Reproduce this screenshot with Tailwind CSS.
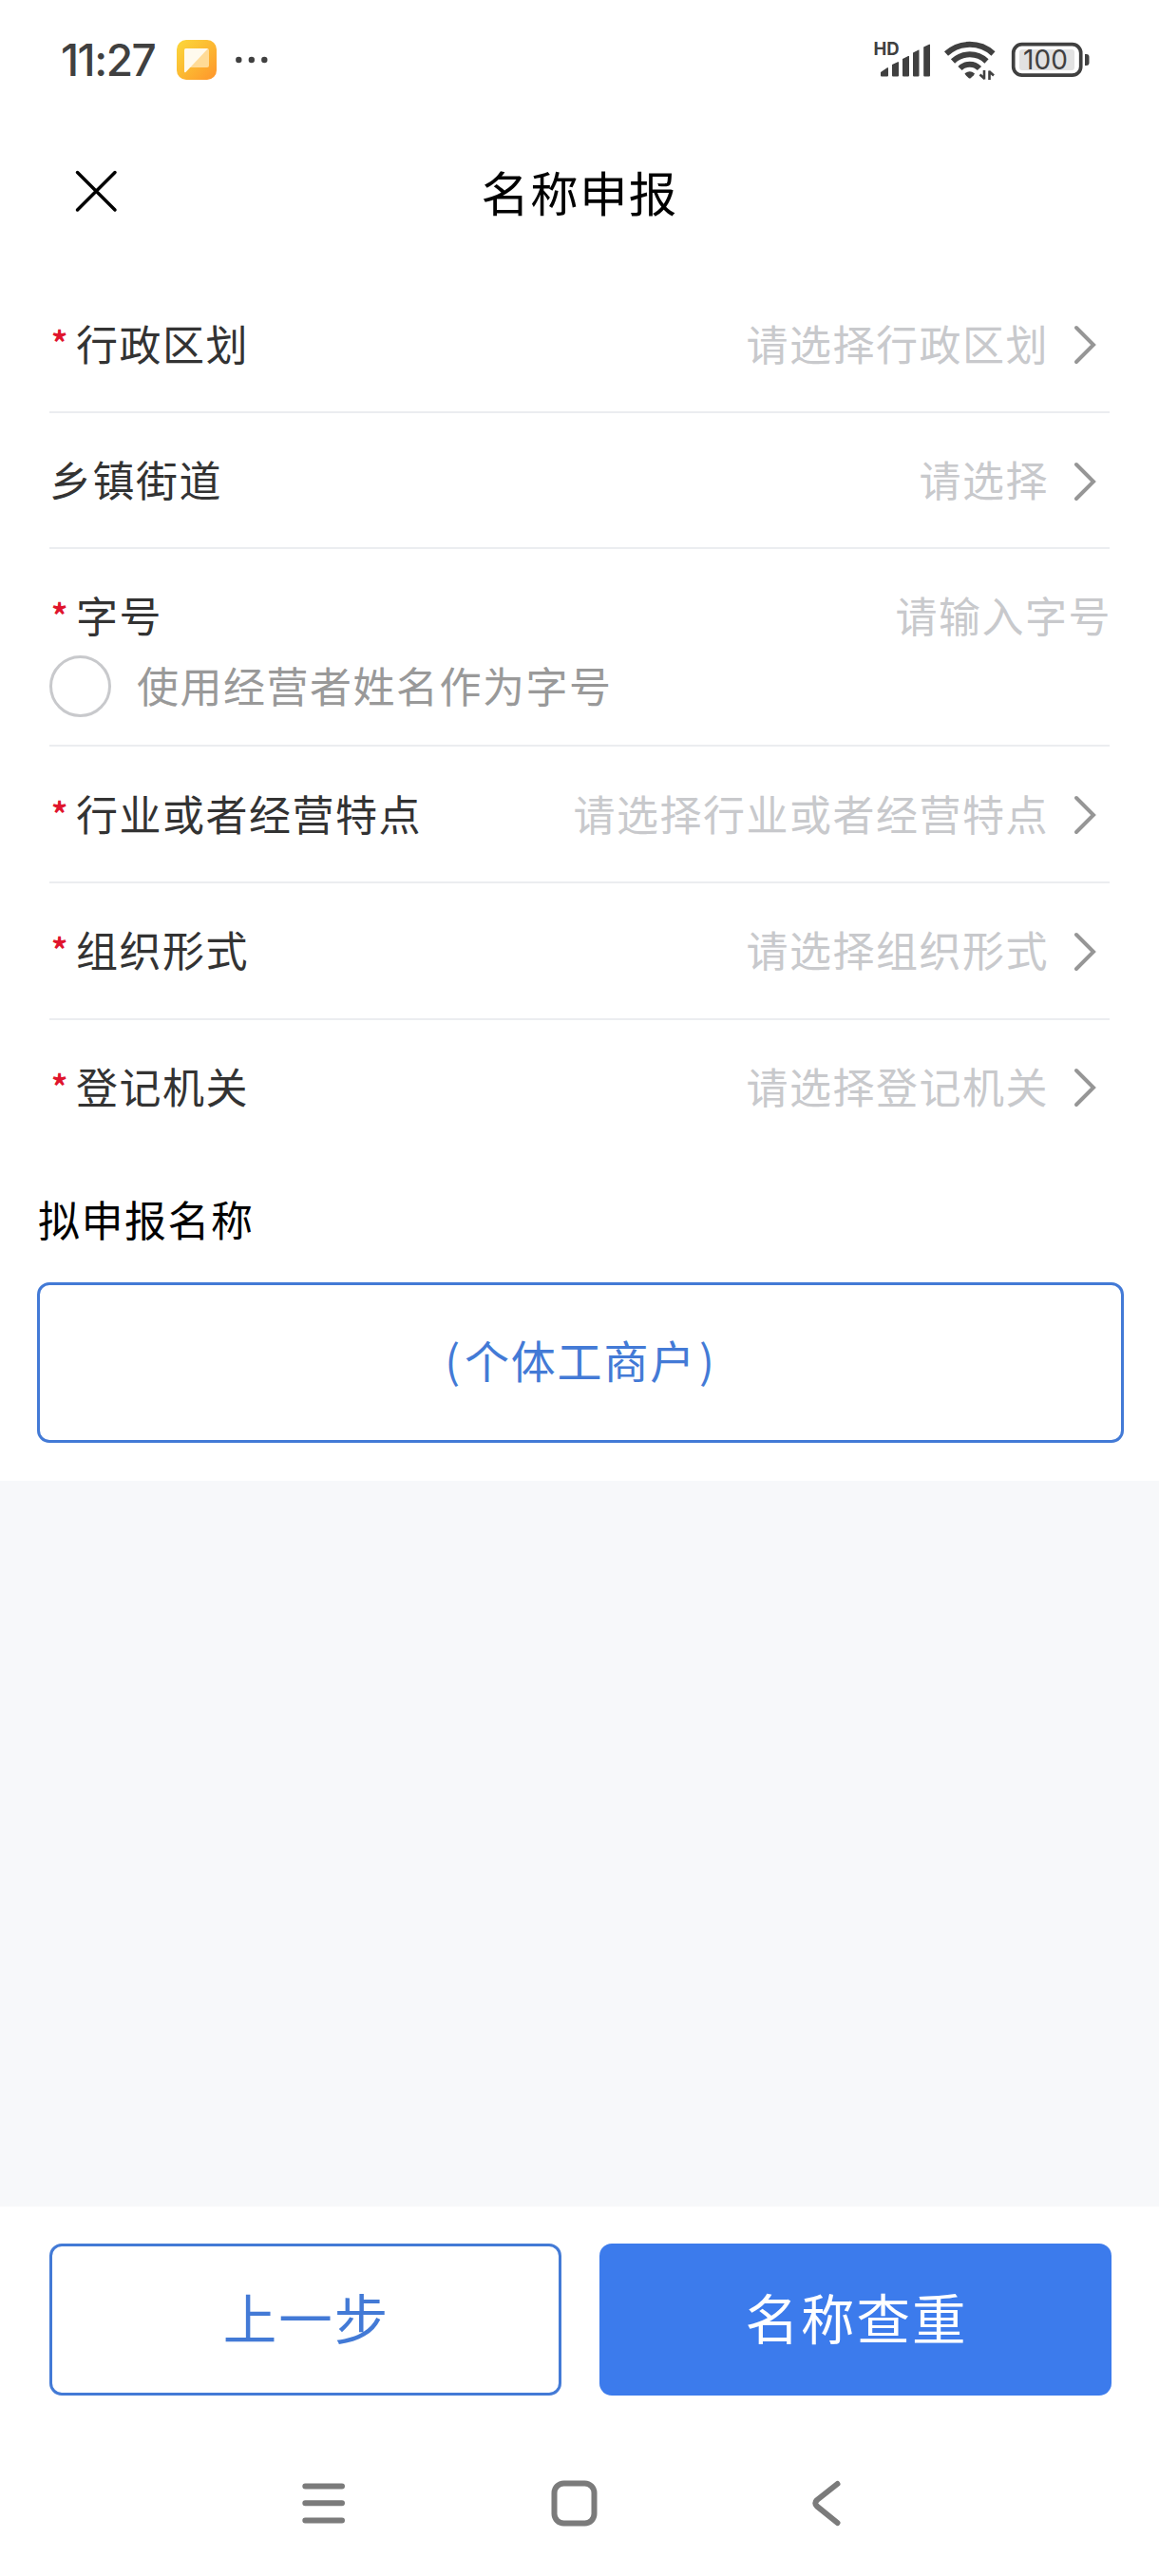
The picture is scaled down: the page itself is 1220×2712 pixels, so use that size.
<!DOCTYPE html>
<html lang="zh-CN">
  <head>
    <meta charset="UTF-8" />
    <meta name="viewport" content="width=device-width, initial-scale=1.0" />
    <script src="https://cdn.jsdelivr.net/npm/@tailwindcss/browser@4"></script>
    <title>名称申报</title>
  </head>
  <body class="bg-white font-['Noto_Sans_CJK_SC',sans-serif] text-[44px] tracking-[1.5px] leading-none text-[#333333]">
    <div class="flex flex-col h-[2712px] w-[1220px] overflow-hidden">
      <!-- status bar -->
      <div class="flex items-center justify-between h-[126px] pl-[64px] pr-[73px]">
        <div class="flex items-center">
          <div class="w-[122px] font-[Inter,sans-serif] font-medium text-[46px] tracking-[-1.5px] text-[#404040] whitespace-nowrap">11:27</div>
          <svg class="w-[42px] h-[42px]" viewBox="0 0 42 42">
            <defs>
              <linearGradient id="note" x1="0" y1="0" x2="1" y2="1">
                <stop offset="0" stop-color="#fbd83c" />
                <stop offset="0.5" stop-color="#fcb932" />
                <stop offset="1" stop-color="#ff942b" />
              </linearGradient>
            </defs>
            <rect width="42" height="42" rx="10" fill="url(#note)" />
            <path d="M10 9h22a2 2 0 0 1 2 2v16a2 2 0 0 1-2 2H13z" fill="#ffdb97" />
            <path d="M9.500 9H33L9.500 34Q8 35 8 33V10.500Q8 9 9.500 9z" fill="#fffaee" />
          </svg>
          <svg class="ml-[19px] w-[36px] h-[8px]" viewBox="0 0 36 8" fill="#404040">
            <circle cx="4.300" cy="4" r="3.200" />
            <circle cx="17.800" cy="4" r="3.200" />
            <circle cx="31.300" cy="4" r="3.200" />
          </svg>
        </div>
        <svg class="w-[228px] h-[50px] tracking-normal" viewBox="920 38 228 50" fill="#404040">
          <text x="920.500" y="58" font-family="Inter, sans-serif" font-size="18.500" font-weight="700">HD</text>
          <!-- signal -->
          <path d="M928 76l7-4.800h1v8.300q0 1-1 1h-6q-1 0-1-1zM940 68l6-2.800h1v14.300q0 1-1 1h-5q-1 0-1-1zM951 62l6-3h1v20.500q0 1-1 1h-5q-1 0-1-1zM962 55.500l6-3h.5v27q0 1-1 1h-4.500q-1 0-1-1zM973.200 49.500l5.800-2.800h1v32.800q0 1-1 1h-4.800q-1 0-1-1z" />
          <!-- wifi -->
          <g fill="none" stroke="#404040" stroke-width="6">
            <path d="M997 56.500A36.500 36.500 0 0 1 1046.500 56.500" />
            <path d="M1004 64.500A25.500 25.500 0 0 1 1039.500 64.500" />
            <path d="M1011.500 72A14.500 14.500 0 0 1 1032 72" />
          </g>
          <path d="M1016.500 77.500Q1021.700 73 1027 77.500Q1026.500 79 1023 82Q1021.700 83 1020.500 82Q1017 79 1016.500 77.500z" />
          <path d="M1037 74v9.500M1037.500 83l-5-4.500M1042.500 84v-9.500M1042 75l5 4.500" fill="none" stroke="#404040" stroke-width="2.600" />
          <!-- battery -->
          <rect x="1067.700" y="46.700" width="71" height="32.500" rx="9" fill="none" stroke="#404040" stroke-width="3.700" />
          <rect x="1074" y="52" width="58" height="22" rx="3" fill="#e2e2e2" />
          <path d="M1143 57h1.500q3 0 3 3v6q0 3-3 3h-1.500z" />
          <text x="1101.500" y="73" text-anchor="middle" font-family="Inter, sans-serif" font-size="28" textLength="47" lengthAdjust="spacing">100</text>
        </svg>
      </div>

      <!-- title bar -->
      <div class="grid grid-cols-[1fr_auto_1fr] items-center h-[154px] px-[78px]">
        <svg class="w-[46px] h-[46px] -mt-1" viewBox="0 0 46 46" fill="none" stroke="#000" stroke-width="3.500" stroke-linecap="round">
          <path d="M3.500 3.500L43 43M43 3.500L3.500 43" />
        </svg>
        <h1 class="pb-1 text-[50.500px] tracking-[1.300px] text-black">名称申报</h1>
      </div>

      <!-- form -->
      <div class="pt-[11px] px-[52px]">
        <div class="flex items-center h-[143.700px] border-b-2 border-[#ebedf0]">
          <span class="w-[28px] pl-[2px] pb-[3px] text-[34px] font-bold text-[#e0142d]">*</span>
          <span class="pb-[2px]">行政区划</span>
          <span class="ml-auto pb-[2px] text-[#c8c9cc]">请选择行政区划</span>
          <svg class="mt-[2px] ml-[24px] mr-[12px] w-[28px] h-[44px]" viewBox="0 0 28 44" fill="none" stroke="#969696" stroke-width="4" stroke-linecap="round"><path d="M5 4L23 22L5 40" /></svg>
        </div>
        <div class="flex items-center h-[143.700px] border-b-2 border-[#ebedf0]">
          <span class="pb-[3px]">乡镇街道</span>
          <span class="ml-auto pb-[3px] text-[#c8c9cc]">请选择</span>
          <svg class="mt-[2px] ml-[24px] mr-[12px] w-[28px] h-[44px]" viewBox="0 0 28 44" fill="none" stroke="#969696" stroke-width="4" stroke-linecap="round"><path d="M5 4L23 22L5 40" /></svg>
        </div>
        <div class="h-[208px] border-b-2 border-[#ebedf0]">
          <div class="flex items-center h-[112px] pt-[28px]">
            <span class="w-[28px] pl-[2px] pb-[3px] text-[34px] font-bold text-[#e0142d]">*</span>
            <span class="pb-[2px]">字号</span>
            <span class="ml-auto -mr-[2px] pb-[2px] text-[#c8c9cc]">请输入字号</span>
          </div>
          <div class="flex items-center gap-[27px] text-[#999999]">
            <span class="w-[65px] h-[65px] rounded-full border-3 border-[#c8c9cc]"></span>
            <span class="pb-1">使用经营者姓名作为字号</span>
          </div>
        </div>
        <div class="flex items-center h-[143.700px] border-b-2 border-[#ebedf0]">
          <span class="w-[28px] pl-[2px] pb-[3px] text-[34px] font-bold text-[#e0142d]">*</span>
          <span class="pb-[2px]">行业或者经营特点</span>
          <span class="ml-auto pb-[2px] text-[#c8c9cc]">请选择行业或者经营特点</span>
          <svg class="mt-[2px] ml-[24px] mr-[12px] w-[28px] h-[44px]" viewBox="0 0 28 44" fill="none" stroke="#969696" stroke-width="4" stroke-linecap="round"><path d="M5 4L23 22L5 40" /></svg>
        </div>
        <div class="flex items-center h-[143.700px] border-b-2 border-[#ebedf0]">
          <span class="w-[28px] pl-[2px] pb-[3px] text-[34px] font-bold text-[#e0142d]">*</span>
          <span class="pb-[3px]">组织形式</span>
          <span class="ml-auto pb-[3px] text-[#c8c9cc]">请选择组织形式</span>
          <svg class="mt-[2px] ml-[24px] mr-[12px] w-[28px] h-[44px]" viewBox="0 0 28 44" fill="none" stroke="#969696" stroke-width="4" stroke-linecap="round"><path d="M5 4L23 22L5 40" /></svg>
        </div>
        <div class="flex items-center h-[142.700px]">
          <span class="w-[28px] pl-[2px] pb-[4px] text-[34px] font-bold text-[#e0142d]">*</span>
          <span class="pb-[4px]">登记机关</span>
          <span class="ml-auto pb-[4px] text-[#c8c9cc]">请选择登记机关</span>
          <svg class="ml-[24px] mr-[12px] w-[28px] h-[44px]" viewBox="0 0 28 44" fill="none" stroke="#969696" stroke-width="4" stroke-linecap="round"><path d="M5 4L23 22L5 40" /></svg>
        </div>
      </div>

      <!-- proposed name -->
      <div class="flex-none pl-[39px] pr-[37px] pb-[40px]">
        <div class="flex items-center h-[133.500px] pl-px text-black">拟申报名称</div>
        <div class="flex items-center justify-center gap-[3px] h-[169px] pb-[8px] rounded-[13px] border-3 border-[#437ad6] text-[47px] tracking-[1.800px] text-[#437ad6]"><span>(</span><span>个体工商户</span><span>)</span></div>
      </div>

      <div class="grow bg-[#f7f8fa]"></div>

      <!-- actions -->
      <div class="flex justify-between h-[199px] pt-[39px] pl-[52px] pr-[50px] text-[56.500px] tracking-[2px]">
        <button class="w-[539px] pb-[8px] pl-[2px] rounded-[13px] border-3 border-[#437ad6] text-[#437ad6]">上一步</button>
        <button class="w-[539px] pb-[8px] pl-[2px] rounded-[13px] bg-[#3c7bec] text-white">名称查重</button>
      </div>

      <!-- system navigation -->
      <div class="flex-none h-[190px] pt-[87px] pl-[316px]">
        <svg class="w-[572px] h-[52px]" viewBox="317 2609 572 52" fill="none" stroke="#7b7b7b" stroke-width="6" stroke-linecap="round" stroke-linejoin="round">
          <path d="M322.300 2617.500H361M322.300 2635.300H361M322.300 2653.500H361" />
          <rect x="584.500" y="2614.500" width="42" height="42" rx="10" />
          <path d="M882.500 2615L861 2632Q857.500 2635.300 861 2638.700L882.500 2656" />
        </svg>
      </div>
    </div>
  </body>
</html>
